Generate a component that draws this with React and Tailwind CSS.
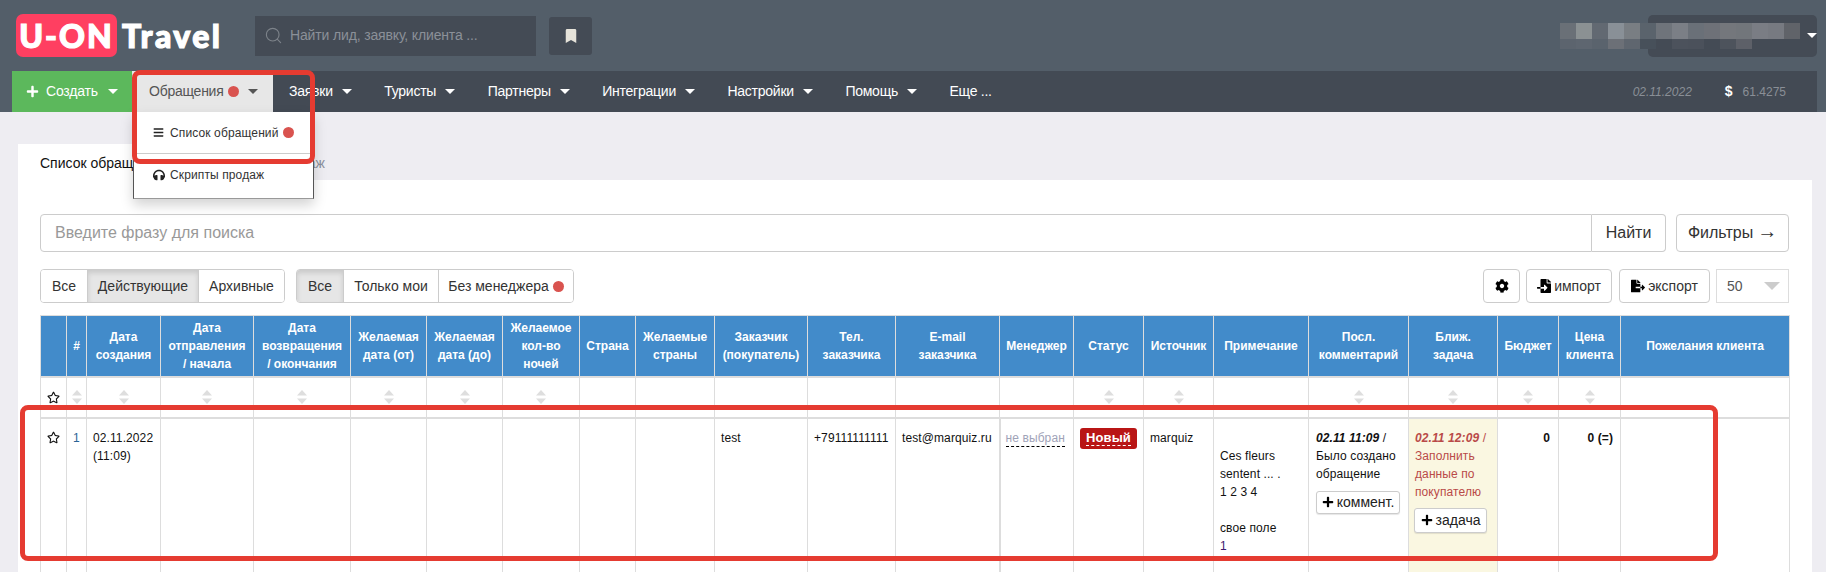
import React from "react";
import { FaBars, FaHeadphones, FaRegStar, FaCog, FaFileImport, FaFileExport, FaPlus, FaBookmark } from "react-icons/fa";
import { Search } from "lucide-react";

const Caret = ({ className = "" }) => (
  <svg width="10" height="5" viewBox="0 0 10 5" className={className}><polygon points="0,0 10,0 5,5" fill="currentColor" /></svg>
);
const Dot = () => <span className="inline-block w-[11px] h-[11px] rounded-full bg-[#d9534f]" />;
const Sort = () => (
  <svg width="10" height="14" viewBox="0 0 10 14" className="mx-auto block"><polygon points="5,0 10,5.5 0,5.5" fill="#dedede" /><polygon points="0,8.5 10,8.5 5,14" fill="#dedede" /></svg>
);

const columns = [
  { w: 26, head: [""], sort: false },
  { w: 20, head: ["#"], sort: true },
  { w: 74, head: ["Дата", "создания"], sort: true },
  { w: 93, head: ["Дата", "отправления", "/ начала"], sort: true },
  { w: 97, head: ["Дата", "возвращения", "/ окончания"], sort: true },
  { w: 76, head: ["Желаемая", "дата (от)"], sort: true },
  { w: 76, head: ["Желаемая", "дата (до)"], sort: true },
  { w: 77, head: ["Желаемое", "кол-во", "ночей"], sort: true },
  { w: 56, head: ["Страна"], sort: false },
  { w: 79, head: ["Желаемые", "страны"], sort: false },
  { w: 93, head: ["Заказчик", "(покупатель)"], sort: false },
  { w: 88, head: ["Тел.", "заказчика"], sort: false },
  { w: 104, head: ["E-mail", "заказчика"], sort: false },
  { w: 74, head: ["Менеджер"], sort: false },
  { w: 70, head: ["Статус"], sort: true },
  { w: 70, head: ["Источник"], sort: true },
  { w: 95, head: ["Примечание"], sort: false },
  { w: 100, head: ["Посл.", "комментарий"], sort: true },
  { w: 89, head: ["Ближ.", "задача"], sort: true },
  { w: 61, head: ["Бюджет"], sort: true },
  { w: 62, head: ["Цена", "клиента"], sort: true },
  { w: 169, head: ["Пожелания клиента"], sort: false },
];

const navItems = ["Заявки", "Туристы", "Партнеры", "Интеграции", "Настройки", "Помощь"];

const mosaicTop = ["#6a7077", "#8b9193", "#626972", "#899097", "#797e83", "#5a636c", "#6f747b", "#7b7f86", "#6a7078", "#6e7178", "#74777c", "#72767b", "#7a7d84", "#777a81", "#606369"];
const mosaicBottom = ["#5c646e", "#5e6670", "#5a636d", "#6c7077", "#5f666f", "#47505a", "#444b55", "#4c525c", "#4b515b", "#444b55", "#4d535c", "#5d6068"];

const Btn = ({ children, active, cls = "" }) => (
  <div className={`h-full flex items-center justify-center border-l border-[#ccc] first:border-l-0 text-[14px] ${active ? "bg-[#e6e6e6] text-[#333] shadow-[inset_0_3px_5px_rgba(0,0,0,0.125)]" : "bg-white text-[#333]"} ${cls}`}>{children}</div>
);

export default function App() {
  return (
    <div className="relative w-[1826px] h-[572px] overflow-hidden bg-[#eeedf2] font-['Liberation_Sans',Arial,sans-serif] text-[#111]">
      {/* Top bar */}
      <header className="relative h-[71px] bg-[#535e69] flex items-center pl-4 pr-[9px]">
        <div className="w-[239px] flex items-center">
          <div className="w-[101px] h-[43px] rounded-[7px] bg-[#ff3f61] flex items-center justify-center text-white font-['Lato',sans-serif] font-black text-[32px] tracking-[2px] [-webkit-text-stroke:1.2px_white]">U-ON</div>
          <div className="ml-[5px] text-white font-['Lato',sans-serif] font-black text-[32px] tracking-[2.4px] [-webkit-text-stroke:1.2px_white]">Travel</div>
        </div>
        <div className="w-[281px] h-[40px] bg-[#444b55] flex items-center pl-[9px] text-[14px] tracking-[-0.15px] text-[#8b9098]">
          <Search size={19} strokeWidth={1.4} className="text-[#7d838a] mr-[7px]" />
          <span>Найти лид, заявку, клиента ...</span>
        </div>
        <div className="ml-[13px] w-[43px] h-[38px] rounded-[3px] bg-[#444b55] flex items-center justify-center">
          <FaBookmark size={14} className="text-[#e6e3da]" />
        </div>
        <div className="ml-auto w-[169px] h-[42px] rounded-[5px] bg-[#444b55] flex items-center justify-end">
          <Caret className="text-white" />
        </div>
        <div className="absolute left-[1560px] top-[23px] w-[240px]">
          <div className="flex h-[16px]">{mosaicTop.map((c, i) => <div key={i} className="w-[16px] h-full" style={{ background: c }} />)}</div>
          <div className="flex h-[10px]">{mosaicBottom.map((c, i) => <div key={i} className="w-[16px] h-full" style={{ background: c }} />)}</div>
        </div>
      </header>

      {/* Nav */}
      <div className="h-[41px] bg-[#535e69] pl-3 pr-[9px]">
        <nav className="h-full bg-[#434a54] flex items-center text-[14px] text-white">
          <div className="w-[120px] h-full bg-[#5cb85c] flex items-center pl-[14px] tracking-[-0.2px]">
            <FaPlus size={13} />
            <span className="ml-[7px]">Создать</span>
            <Caret className="ml-[10px]" />
          </div>
          <div className="w-[141px] h-full bg-[#e7e7e7] flex items-center pl-[17px] text-[#555] tracking-[-0.25px]">
            <span>Обращения</span>
            <span className="ml-[4px] flex"><Dot /></span>
            <Caret className="ml-[9px] text-[#555]" />
          </div>
          {navItems.map((t) => (
            <div key={t} className="h-full flex items-center pl-4 pr-[16.5px] tracking-[-0.25px]">
              <span>{t}</span>
              <Caret className="ml-[9px]" />
            </div>
          ))}
          <div className="h-full flex items-center pl-4 tracking-[-0.25px]"><span>Еще ...</span></div>
          <div className="ml-auto flex items-center pr-[31px] text-[12px] text-[#8a8f96]">
            <span className="italic">02.11.2022</span>
            <span className="ml-[33px] text-white font-bold text-[14px]">$</span>
            <span className="ml-[10px]">61.4275</span>
          </div>
        </nav>
      </div>

      {/* Main */}
      <main className="pt-[32px] pl-[18px] pr-[14px]">
        <div className="h-[36px] flex items-center text-[14px]">
          <div className="h-full w-[190px] bg-white flex items-center pl-[22px] pt-[2px] text-[#111]">Список обращений</div>
          <div className="ml-[9px] pt-[2px] text-[#8a8f9c]">Скрипты продаж</div>
        </div>

        <section className="bg-white pl-[22px] pr-[23px] pt-[34px] h-[500px]">
          <div className="flex h-[38px]">
            <div className="flex-1 border border-[#ccc] rounded-l-[4px] flex items-center pl-[14px] text-[16px] text-[#999]">Введите фразу для поиска</div>
            <div className="w-[74px] border border-l-0 border-[#ccc] rounded-r-[4px] flex items-center justify-center text-[16px] text-[#333]">Найти</div>
            <div className="ml-[10px] w-[113px] border border-[#ccc] rounded-[4px] flex items-center justify-center text-[16px] text-[#333]">Фильтры <span className="ml-[4px] -mt-[5px] text-[20px] leading-[20px]">→</span></div>
          </div>

          <div className="mt-[17px] h-[34px] flex">
            <div className="flex h-full border border-[#ccc] rounded-[4px] overflow-hidden">
              <Btn cls="w-[46px]">Все</Btn>
              <Btn active cls="w-[111px]">Действующие</Btn>
              <Btn cls="w-[86px]">Архивные</Btn>
            </div>
            <div className="ml-[11px] flex h-full border border-[#ccc] rounded-[4px] overflow-hidden">
              <Btn active cls="w-[46px]">Все</Btn>
              <Btn cls="w-[95px]">Только мои</Btn>
              <Btn cls="w-[135px] gap-[4px]">Без менеджера <Dot /></Btn>
            </div>
            <div className="ml-auto flex h-full">
              <div className="w-[37px] border border-[#ccc] rounded-[4px] flex items-center justify-center"><FaCog size={14} className="text-black" /></div>
              <div className="ml-[6px] w-[86px] border border-[#ccc] rounded-[4px] flex items-center justify-center text-[14px] text-[#333]"><FaFileImport size={14} className="text-black mr-[3px]" />импорт</div>
              <div className="ml-[7px] w-[91px] border border-[#ccc] rounded-[4px] flex items-center justify-center text-[14px] text-[#333]"><FaFileExport size={14} className="text-black mr-[3px]" />экспорт</div>
              <div className="ml-[6px] w-[73px] border border-[#ddd] flex items-center justify-between pl-[10px] pr-[8px] text-[14px] text-[#555]">50<svg width="16" height="8" viewBox="0 0 16 8"><polygon points="0,0 16,0 8,8" fill="#ccc" /></svg></div>
            </div>
          </div>

          <table className="mt-[12px] w-[1749px] table-fixed border-collapse text-[12px] leading-[18px]">
            <colgroup>
              {columns.map((c, i) => <col key={i} style={{ width: c.w }} />)}
            </colgroup>
            <thead>
              <tr className="h-[61px] bg-[#428bca] text-white">
                {columns.map((c, i) => (
                  <th key={i} className="border border-[#ddd] border-b-2 font-bold text-center align-middle p-0 whitespace-nowrap">
                    {c.head.map((l, j) => <div key={j}>{l}</div>)}
                  </th>
                ))}
              </tr>
            </thead>
            <tbody>
              <tr className="h-[41px]">
                {columns.map((c, i) => (
                  <td key={i} className="border border-[#ddd] border-b-2 p-0 align-middle">
                    {i === 0 ? <FaRegStar size={13} className="mx-auto text-[#111]" /> : c.sort ? <Sort /> : null}
                  </td>
                ))}
              </tr>
              <tr className="h-[200px] align-top tracking-[0.1px]">
                <td className="border border-[#ddd] pt-[12px]"><FaRegStar size={13} className="mx-auto text-[#111]" /></td>
                <td className="border border-[#ddd] pt-[10px] text-center text-[#2a6496]">1</td>
                <td className="border border-[#ddd] pt-[10px] px-[6px]">02.11.2022<br />(11:09)</td>
                <td className="border border-[#ddd]" />
                <td className="border border-[#ddd]" />
                <td className="border border-[#ddd]" />
                <td className="border border-[#ddd]" />
                <td className="border border-[#ddd]" />
                <td className="border border-[#ddd]" />
                <td className="border border-[#ddd]" />
                <td className="border border-[#ddd] pt-[10px] px-[6px]">test</td>
                <td className="border border-[#ddd] pt-[10px] px-[6px]">+79111111111</td>
                <td className="border border-[#ddd] pt-[10px] px-[6px]">test@marquiz.ru</td>
                <td className="border border-[#ddd] border-l-2 pt-[10px] px-[5px]">
                  <span className="inline-block leading-[16px] text-[#9fa3b8] border-b border-dashed border-black">не выбран</span>
                </td>
                <td className="border border-[#ddd] pt-[9px] px-[6px]">
                  <div className="w-[57px] h-[21px] rounded-[3px] bg-[#b91515] flex items-center justify-center">
                    <span className="font-bold text-[13px] leading-[15px] text-white border-b border-dashed border-white">Новый</span>
                  </div>
                </td>
                <td className="border border-[#ddd] pt-[10px] px-[6px]">marquiz</td>
                <td className="border border-[#ddd] pt-[10px] px-[6px]">
                  <br />Ces fleurs<br />sentent ... .<br />1 2 3 4<br /><br />свое поле<br /><span className="text-[#3d1a6e]">1</span>
                </td>
                <td className="border border-[#ddd] pt-[10px] px-[7px]">
                  <b className="italic">02.11 11:09</b> /<br />Было создано<br />обращение
                  <div className="mt-[8px] w-[84px] h-[23px] border border-[#ccc] rounded-[3px] bg-white flex items-center justify-center text-[14px] tracking-normal text-[#222] shadow-[0_1px_1px_rgba(0,0,0,0.1)]"><FaPlus size={12} className="text-black mr-[3px]" />коммент.</div>
                </td>
                <td className="border border-[#ddd] pt-[10px] px-[6px] bg-[#faf7e1] text-[#b94a48]">
                  <b className="italic">02.11 12:09</b> /<br />Заполнить<br />данные по<br />покупателю
                  <div className="mt-[7px] -ml-px w-[73px] h-[25px] border border-[#ccc] rounded-[3px] bg-white flex items-center justify-center text-[14px] tracking-normal text-[#222] shadow-[0_1px_1px_rgba(0,0,0,0.1)]"><FaPlus size={12} className="text-black mr-[3px]" />задача</div>
                </td>
                <td className="border border-[#ddd] pt-[10px] pr-[8px] text-right font-bold">0</td>
                <td className="border border-[#ddd] pt-[10px] pr-[7px] text-right font-bold">0 (=)</td>
                <td className="border border-[#ddd]" />
              </tr>
            </tbody>
          </table>
        </section>
      </main>

      {/* Dropdown */}
      <div className="absolute left-[133px] top-[112px] w-[181px] h-[87px] bg-white border-l border-b border-r border-[#555] border-b-[#999] shadow-[0_6px_12px_rgba(0,0,0,0.175)] text-[12px] tracking-[0.12px] text-[#333]">
        <div className="h-[41px] flex items-center pl-[19px] gap-[6px]">
          <FaBars size={11} className="text-[#222]" />
          <span>Список обращений</span>
          <span className="-ml-[2px] flex"><Dot /></span>
        </div>
        <div className="h-px bg-[#ccc]" />
        <div className="h-[41px] flex items-center pl-[19px] gap-[5px]">
          <FaHeadphones size={12} className="text-[#222]" />
          <span>Скрипты продаж</span>
        </div>
      </div>

      {/* Highlight frames */}
      <div className="absolute left-[132px] top-[70px] w-[183px] h-[94px] border-[5px] border-[#e53b31] rounded-[8px]" />
      <div className="absolute left-[20px] top-[405px] w-[1698px] h-[156px] border-[5px] border-[#e53b31] rounded-[8px]" />
    </div>
  );
}
